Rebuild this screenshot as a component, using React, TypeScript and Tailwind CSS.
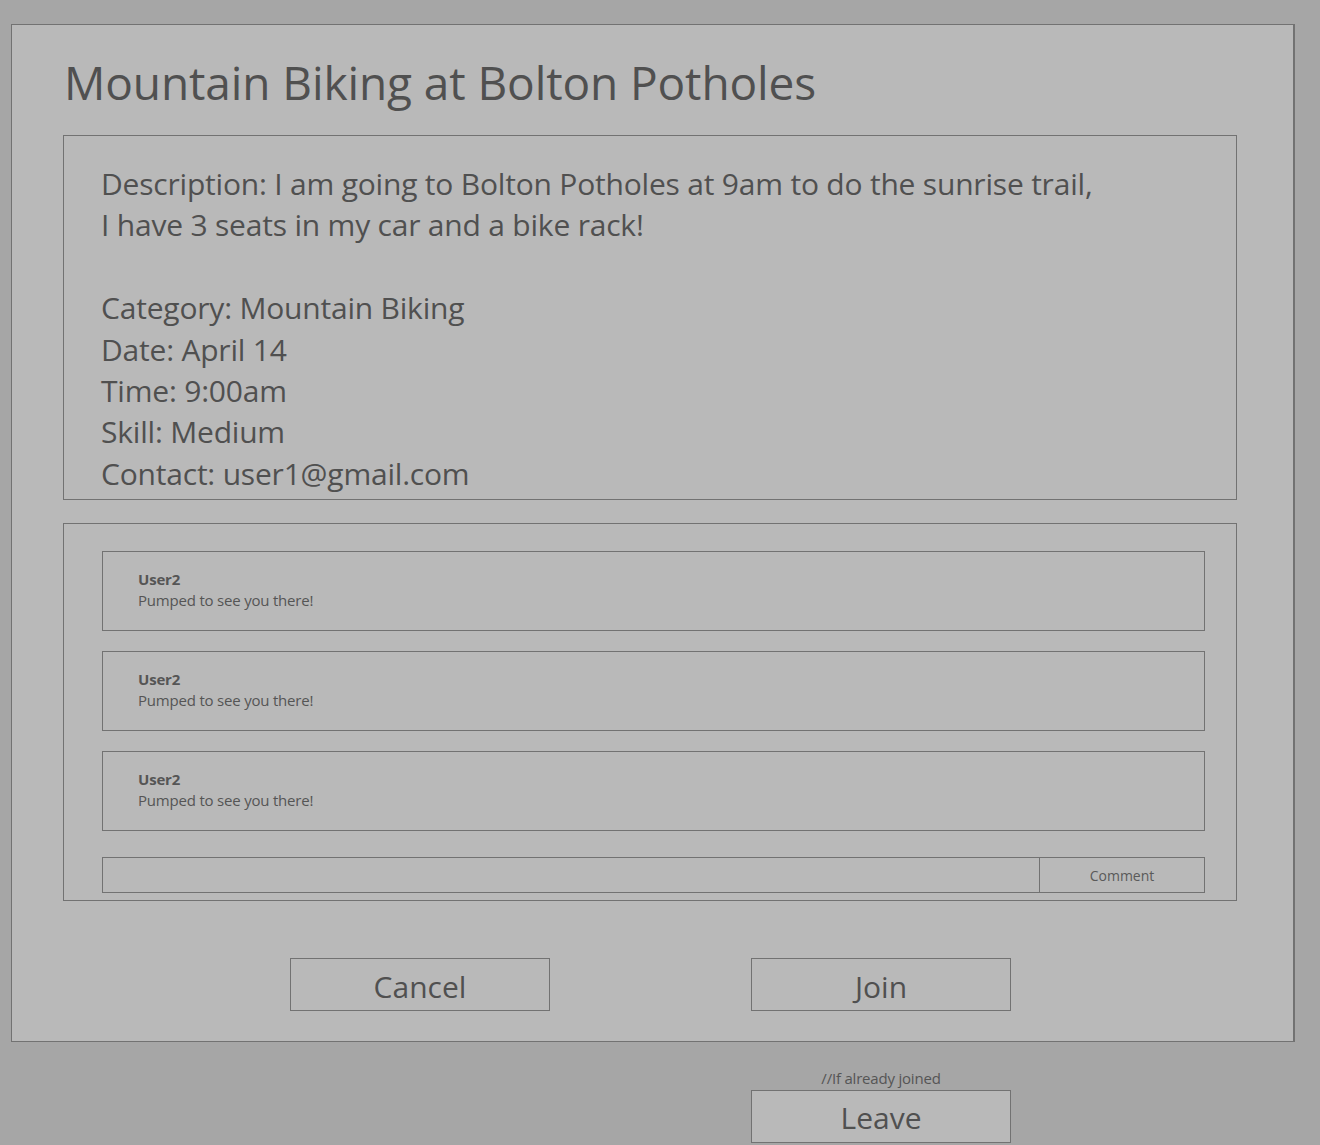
import React from 'react';

const comments = [1, 2, 3];

export default function App() {
  return (
    <div
      className="min-h-screen bg-[#a6a6a6] pt-[24px] pl-[11px] text-[#505050]"
      style={{ fontFamily: '"Open Sans", "Noto Sans", sans-serif' }}
    >
      <div className="w-[1284px] h-[1018px] bg-[#b9b9b9] border border-[#727272] border-r-2 pl-[51px]">
        <h1 className="pt-[33px] h-[110px] text-[46px] leading-[48px] tracking-[-0.1px] pl-[1px]">
          Mountain Biking at Bolton Potholes
        </h1>

        <div className="w-[1174px] h-[365px] border border-[#727272] pl-[37px] pt-[27px] text-[30px] leading-[41.4px] tracking-[-0.2px]">
          <p>Description: I am going to Bolton Potholes at 9am to do the sunrise trail,</p>
          <p>I have 3 seats in my car and a bike rack!</p>
          <p>&nbsp;</p>
          <p>Category: Mountain Biking</p>
          <p>Date: April 14</p>
          <p>Time: 9:00am</p>
          <p>Skill: Medium</p>
          <p>Contact: user1@gmail.com</p>
        </div>

        <div className="w-[1174px] h-[378px] mt-[23px] border border-[#727272] pl-[38px] pt-[27px]">
          <div className="flex flex-col gap-[20px]">
            {comments.map((i) => (
              <div
                key={i}
                className="w-[1103px] h-[80px] border border-[#727272] pl-[35px] pt-[17px] text-[15px] leading-[21px] tracking-[-0.2px] text-[#555555]"
              >
                <div className="font-bold">User2</div>
                <div>Pumped to see you there!</div>
              </div>
            ))}
          </div>
          <div className="mt-[26px] w-[1103px] h-[36px] border border-[#727272] flex">
            <div className="flex-1" />
            <button className="w-[165px] border-l border-[#727272] text-[14px] text-[#5a5a5a]">
              Comment
            </button>
          </div>
        </div>

        <div className="flex gap-[201px] ml-[227px] mt-[57px]">
          <button className="w-[260px] h-[53px] border border-[#727272] text-[30px] leading-[51px] pt-[2px]">
            Cancel
          </button>
          <button className="w-[260px] h-[53px] border border-[#727272] text-[30px] leading-[51px] pt-[2px]">
            Join
          </button>
        </div>
      </div>

      <div className="ml-[740px] w-[260px] pt-[26px]">
        <div className="text-center text-[15px] leading-[22px] text-[#555555] tracking-[-0.2px] -mt-[1px] mb-[1px]">
          //If already joined
        </div>
        <button className="w-[260px] h-[53px] border border-[#727272] bg-[#b9b9b9] text-[30px] leading-[51px] pt-[1px]">
          Leave
        </button>
      </div>
    </div>
  );
}
